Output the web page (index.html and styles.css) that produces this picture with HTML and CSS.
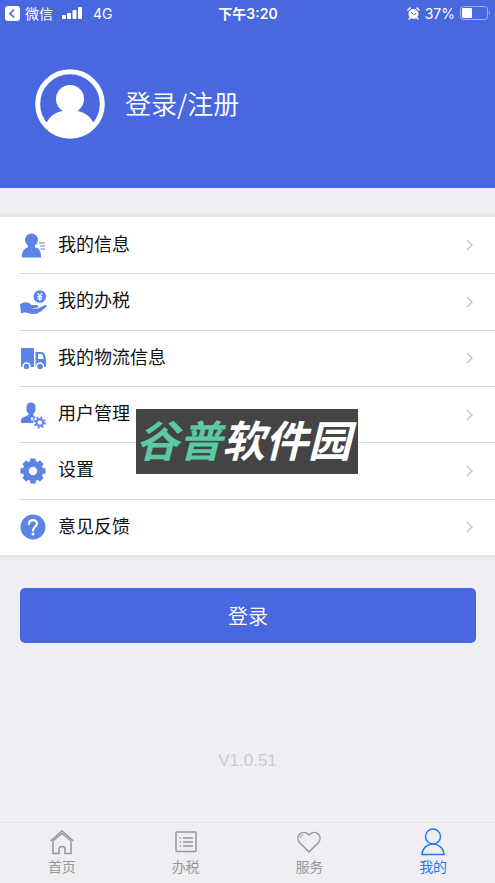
FILE: index.html
```html
<!DOCTYPE html>
<html lang="zh-CN">
<head>
<meta charset="utf-8">
<meta name="viewport" content="width=device-width, initial-scale=1">
<title>我的</title>
<link rel="stylesheet" href="styles.css">
</head>
<body>
<div class="app">
  <header class="header">
    <div class="status">
      <div class="status-side">
        <svg width="15" height="15" viewBox="0 0 15 15"><rect width="15" height="15" rx="3" fill="#fff"/><path d="M9 3.500 5 7.500l4 4" fill="none" stroke="#4967df" stroke-width="1.700"/></svg>
        <span>微信</span>
        <svg class="signal" width="20" height="13" viewBox="0 0 20 13" fill="#fff"><rect y="8" width="4" height="4" rx="1"/><rect x="5" y="6" width="4" height="6" rx="1"/><rect x="10.500" y="3" width="4" height="9" rx="1"/><rect x="16" width="4" height="12" rx="1"/></svg>
        <span>4G</span>
      </div>
      <strong class="clock">下午3:20</strong>
      <div class="status-side status-right">
        <svg width="13" height="13" viewBox="0 0 13 13"><circle cx="6.500" cy="7" r="5" fill="#fff"/><path d="M1 3 3 1M10 1l2 2M3 11l-1 1M10 11l1 1" stroke="#fff" stroke-width="1.600" stroke-linecap="round"/><path d="M4 5l2.500 2.500L9 6.500" fill="none" stroke="#4967df"/></svg>
        <span>37%</span>
        <svg width="31" height="14" viewBox="0 0 31 14"><rect x=".5" y=".5" width="27" height="13" rx="3" fill="none" stroke="#a4b3ef"/><rect x="2" y="2" width="10" height="10" rx="1" fill="#fff"/><path d="M29 4.500q2 2.500 0 5z" fill="#a4b3ef"/></svg>
      </div>
    </div>
    <a class="profile" href="#login">
      <svg width="70" height="70" viewBox="0 0 70 70"><defs><clipPath id="face"><circle cx="35" cy="35" r="33"/></clipPath></defs><circle cx="35" cy="35" r="32.300" fill="none" stroke="#fff" stroke-width="5"/><g fill="#fff" clip-path="url(#face)"><circle cx="35" cy="30" r="14"/><path d="M28 40h14v2c8 1 14 6 17 13v15H11V55c3-7 9-12 17-13z"/></g></svg>
      <span>登录/注册</span>
    </a>
  </header>

  <main class="main">
    <nav class="menu" aria-label="个人中心">
      <a class="row" href="#info">
        <svg class="icon" viewBox="0 0 28 28" fill="#5d83e6"><circle cx="12.500" cy="9" r="6.500"/><path d="M3 26.500v-2c0-5 3.500-8.500 8-8.500h3c5 0 8 3.500 8 8.500v2zM9 13h7v4H9z"/><path d="M20 12h6M21 15h5M21.500 18H26" stroke="#8eabee" stroke-width="1.300"/></svg>
        <span class="cell"><span class="label">我的信息</span><svg class="chevron" viewBox="0 0 8 12"><path d="M1 1l5 5-5 5"/></svg></span>
      </a>
      <a class="row" href="#tax">
        <svg class="icon" viewBox="0 0 28 28" fill="#5d83e6"><circle cx="20.800" cy="8.500" r="6.300"/><path d="M18.500 5l2.300 3 2.300-3M20.800 8v5M18.300 8.700h5M18.300 10.900h5" fill="none" stroke="#fff" stroke-width="1.200"/><path d="M1 16.500c4-3 8-3 11.500.5H17c3 0 3 3 0 3h-4.500c3 1 6 1 8.500-.5l5-2.500c2 0 2 1.500 0 3-5 4.500-8 6.500-12 6-4-.5-6-2-9-1.500L2 25.500z"/></svg>
        <span class="cell"><span class="label">我的办税</span><svg class="chevron" viewBox="0 0 8 12"><path d="M1 1l5 5-5 5"/></svg></span>
      </a>
      <a class="row" href="#delivery">
        <svg class="icon" viewBox="0 0 28 28"><path d="M3 4h11q1 0 1 1v18H2V5q0-1 1-1zM16.500 8H22q3 0 4 3l1 4v8H16.500z" fill="#5d83e6"/><path d="M19 10h3q1.500 0 2 2l.8 3H19z" fill="#fff"/><g fill="#5d83e6" stroke="#fff" stroke-width="1.500"><circle cx="7.500" cy="22.500" r="3.500"/><circle cx="21" cy="22.500" r="3.500"/></g></svg>
        <span class="cell"><span class="label">我的物流信息</span><svg class="chevron" viewBox="0 0 8 12"><path d="M1 1l5 5-5 5"/></svg></span>
      </a>
      <a class="row" href="#users">
        <svg class="icon" viewBox="0 0 28 28"><path d="M7.500 6q0-4.500 4.500-4.500T16.500 6v3q0 2-2 3.500V15l4 2-2 5H2v-2.500q0-2.500 3-3.500l4.500-2v-1.500Q7.500 11 7.500 9z" fill="#5d83e6"/><path d="m11.500 16.500 1.500 4 1.500-4" fill="#fff"/><circle cx="20.800" cy="21.500" r="6.600" fill="#fff"/><circle cx="20.800" cy="21.500" r="3.300" fill="none" stroke="#5d83e6" stroke-width="2"/><circle cx="20.800" cy="21.500" r="5" fill="none" stroke="#5d83e6" stroke-width="2" stroke-dasharray="1.960 1.967"/></svg>
        <span class="cell"><span class="label">用户管理</span><svg class="chevron" viewBox="0 0 8 12"><path d="M1 1l5 5-5 5"/></svg></span>
      </a>
      <a class="row" href="#settings">
        <svg class="icon" viewBox="0 0 28 28"><circle cx="14" cy="14" r="7.200" fill="none" stroke="#5d83e6" stroke-width="6"/><g stroke="#5d83e6" stroke-width="5.500"><path d="M14 1.500V6M14 22v4.500M1.500 14H6M22 14h4.500M5.200 5.200l3 3M19.800 19.800l3 3M5.200 22.800l3-3M19.800 8.200l3-3"/></g></svg>
        <span class="cell"><span class="label">设置</span><svg class="chevron" viewBox="0 0 8 12"><path d="M1 1l5 5-5 5"/></svg></span>
      </a>
      <a class="row" href="#feedback">
        <svg class="icon" viewBox="0 0 28 28"><circle cx="14" cy="14" r="12.500" fill="#5d83e6"/><path d="M10 11c0-5 8-5 8-.5 0 3-4 3.500-4 7" fill="none" stroke="#fff" stroke-width="2.200" stroke-linecap="round"/><circle cx="14" cy="21" r="1.500" fill="#fff"/></svg>
        <span class="cell"><span class="label">意见反馈</span><svg class="chevron" viewBox="0 0 8 12"><path d="M1 1l5 5-5 5"/></svg></span>
      </a>
      <div class="brand"><span class="brand-green">谷普</span>软件园</div>
    </nav>
    <button class="login" type="button">登录</button>
    <p class="version">V1.0.51</p>
  </main>

  <nav class="tabs" aria-label="主导航">
    <a class="tab" href="#home"><svg viewBox="0 0 28 28"><path d="M2.500 13 14 3l11.500 10M5 13v12.500h6V21q0-2.500 3-2.500t3 2.500v4.500h6V13L14 5.500z"/></svg>首页</a>
    <a class="tab" href="#handle"><svg viewBox="0 0 28 28"><rect x="4" y="4" width="20" height="19.500" rx="1"/><path d="M11 10h10M11 14h10M11 18h10M7.500 10H9M7.500 14H9M7.500 18H9"/></svg>办税</a>
    <a class="tab" href="#service"><svg viewBox="0 0 28 28"><path d="M14 24 4.500 14.500C-.5 8 7.500.5 14 7c6.500-6.500 14.500 1 9.500 7.500z"/><path d="M5.500 10q.5-3 3-3.500" stroke-width="1"/></svg>服务</a>
    <a class="tab active" href="#mine" aria-current="page"><svg viewBox="0 0 28 28"><circle cx="14" cy="8.500" r="7.500"/><path d="M3 26.500C4 12.500 24 12.500 25 26.500z"/></svg>我的</a>
  </nav>
</div>
</body>
</html>
```
FILE: styles.css
```css
* { box-sizing: border-box; }

body {
  margin: 0;
  background: #efeef3;
  color: #111;
  font-family: "Liberation Sans", "Noto Sans CJK SC", sans-serif;
}

a { color: inherit; text-decoration: none; }
svg { flex: none; display: block; }

.app {
  display: flex;
  flex-direction: column;
  min-height: 100vh;
}

.header {
  background: #4967df;
  color: #fff;
  padding-bottom: 49px;
}

.status {
  display: grid;
  grid-template-columns: 1fr auto 1fr;
  align-items: center;
  height: 26px;
  padding: 0 4px 0 5px;
  font-family: Inter, "Noto Sans CJK SC", sans-serif;
  font-size: 14px;
}

.status-side {
  display: flex;
  align-items: center;
  gap: 5px;
}

.status-right { justify-content: flex-end; }
.signal { margin: 0 6px 0 4px; }
.clock { font-weight: 600; }

.profile {
  display: flex;
  align-items: center;
  gap: 20px;
  margin-top: 43px;
  padding-left: 35px;
  font-family: "Noto Sans CJK SC", sans-serif;
  font-size: 26px;
  font-weight: 350;
  line-height: 38px;
}

.profile span { padding-bottom: 2px; }

.main {
  flex: 1;
  padding-top: 29px;
}

.menu {
  position: relative;
  display: grid;
  grid-auto-rows: 1fr;
  min-height: 338px;
  background: #fff;
  box-shadow: 0 0 5px #cfced6;
}

.row {
  display: flex;
  align-items: stretch;
  margin-left: 19px;
  font-size: 18px;
}

.row + .row { border-top: 1px solid #dcdcdf; }

.icon {
  width: 28px;
  height: 28px;
  align-self: center;
}

.cell {
  flex: 1;
  display: flex;
  align-items: center;
  justify-content: space-between;
  padding: 0 21px 0 11px;
}

.label { padding-bottom: 5px; }

.chevron {
  width: 8px;
  height: 12px;
  fill: none;
  stroke: #c3c3c8;
  stroke-width: 1.4;
}

.brand {
  position: absolute;
  top: 192px;
  left: 50%;
  width: 222px;
  margin-left: -112px;
  padding: 0 6px 6px 0;
  background: #444;
  color: #fff;
  font-family: "Noto Sans CJK SC", sans-serif;
  font-size: 43px;
  font-style: italic;
  font-weight: 700;
  line-height: 59px;
  text-align: center;
  white-space: nowrap;
}

.brand-green { color: #5bc9a2; }

.login {
  display: block;
  width: calc(100% - 39px);
  height: 55px;
  margin: 33px 19px 0 20px;
  border: 0;
  border-radius: 5px;
  background: #4967df;
  color: #fff;
  font-family: "Noto Sans CJK SC", sans-serif;
  font-size: 20px;
  font-weight: 350;
}

.version {
  margin: 107px 0 20px;
  color: #cbcbd0;
  font-size: 17px;
  line-height: 22px;
  text-align: center;
}

.tabs {
  display: grid;
  grid-template-columns: repeat(4, 1fr);
  border-top: 1px solid #e3e2e8;
}

.tab {
  display: flex;
  flex-direction: column;
  align-items: center;
  padding: 5px 0 4px;
  color: #97979b;
  font-size: 14px;
  line-height: 23px;
}

.tab svg {
  width: 28px;
  height: 28px;
  fill: none;
  stroke: currentColor;
  stroke-width: 1.5;
}

.active { color: #1e7bf5; }
```
